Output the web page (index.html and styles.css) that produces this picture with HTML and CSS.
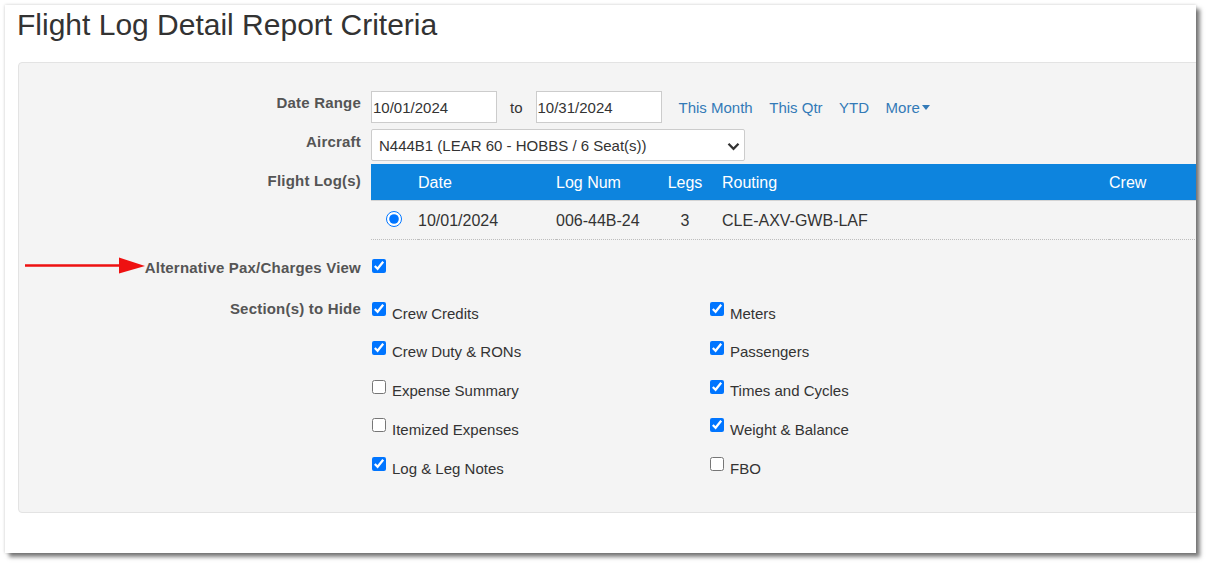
FILE: index.html
```html
<!DOCTYPE html>
<html lang="en">
<head>
<meta charset="utf-8">
<title>Flight Log Detail Report Criteria</title>
<link rel="stylesheet" href="styles.css">
</head>
<body>
<div class="window">
  <svg class="annot-arrow" width="160" height="40" viewBox="0 0 160 40" aria-hidden="true">
    <path d="M20 20.5 L118 20.5" stroke="#ee1111" stroke-width="2.4" fill="none"/>
    <polygon points="114,12.5 140,21 114,28.5" fill="#ee1111"/>
  </svg>

  <h1 class="title">Flight Log Detail Report Criteria</h1>

  <div class="panel">
    <div class="form-row row-date">
      <label class="field-label">Date Range</label>
      <div class="field date-field">
        <input type="text" class="text-input" value="10/01/2024">
        <span class="to">to</span>
        <input type="text" class="text-input" value="10/31/2024">
        <a class="quick-link first">This Month</a>
        <a class="quick-link">This Qtr</a>
        <a class="quick-link">YTD</a>
        <a class="quick-link">More<span class="caret"></span></a>
      </div>
    </div>

    <div class="form-row row-aircraft">
      <label class="field-label">Aircraft</label>
      <div class="field">
        <div class="select-wrap">
          <select class="select-input">
            <option>N444B1 (LEAR 60 - HOBBS / 6 Seat(s))</option>
          </select>
          <svg class="select-chevron" width="13" height="9" viewBox="0 0 13 9" aria-hidden="true">
            <path d="M1.5 1.8 L6.5 6.8 L11.5 1.8" stroke="#333" stroke-width="2.3" fill="none"/>
          </svg>
        </div>
      </div>
    </div>

    <div class="form-row row-logs">
      <label class="field-label">Flight Log(s)</label>
      <div class="field">
        <table class="log-table">
          <colgroup>
            <col class="c-radio"><col class="c-date"><col class="c-num"><col class="c-legs"><col class="c-route"><col class="c-crew">
          </colgroup>
          <thead>
            <tr><th></th><th>Date</th><th>Log Num</th><th class="legs">Legs</th><th class="route">Routing</th><th>Crew</th></tr>
          </thead>
          <tbody>
            <tr>
              <td><input type="radio" class="radio" name="log" checked></td>
              <td>10/01/2024</td>
              <td>006-44B-24</td>
              <td class="legs">3</td>
              <td class="route">CLE-AXV-GWB-LAF</td>
              <td></td>
            </tr>
          </tbody>
        </table>
      </div>
    </div>

    <div class="form-row row-alt">
      <label class="field-label">Alternative Pax/Charges View</label>
      <div class="field">
        <input type="checkbox" class="check alt-check" checked>
      </div>
    </div>

    <div class="form-row row-sections">
      <label class="field-label">Section(s) to Hide</label>
      <div class="field section-grid">
        <label class="check-item"><input type="checkbox" class="check" checked><span>Crew Credits</span></label>
        <label class="check-item"><input type="checkbox" class="check" checked><span>Crew Duty &amp; RONs</span></label>
        <label class="check-item"><input type="checkbox" class="check"><span>Expense Summary</span></label>
        <label class="check-item"><input type="checkbox" class="check"><span>Itemized Expenses</span></label>
        <label class="check-item"><input type="checkbox" class="check" checked><span>Log &amp; Leg Notes</span></label>
        <label class="check-item"><input type="checkbox" class="check" checked><span>Meters</span></label>
        <label class="check-item"><input type="checkbox" class="check" checked><span>Passengers</span></label>
        <label class="check-item"><input type="checkbox" class="check" checked><span>Times and Cycles</span></label>
        <label class="check-item"><input type="checkbox" class="check" checked><span>Weight &amp; Balance</span></label>
        <label class="check-item"><input type="checkbox" class="check"><span>FBO</span></label>
      </div>
    </div>
  </div>
</div>
</body>
</html>
```

FILE: styles.css
```css
* { box-sizing: border-box; }

html, body { height: 100%; }

body {
  margin: 0;
  background: #ffffff;
  font-family: "Liberation Sans", Arial, sans-serif;
  color: #333;
}

.window {
  position: relative;
  margin: 5px 0 0 5px;
  width: 1191px;
  height: 548px;
  background: #ffffff;
  overflow: hidden;
  box-shadow: 4px 4px 4px rgba(0, 0, 0, 0.5), 0 0 3px rgba(0, 0, 0, 0.2);
}

.annot-arrow {
  position: absolute;
  left: 0;
  top: 240px;
  z-index: 2;
}

.title {
  margin: 3px 0 0 12px;
  font-size: 30px;
  line-height: 34px;
  font-weight: normal;
  color: #333;
}

.panel {
  margin: 20px 0 0 13px;
  width: 1300px;
  background: #f4f4f4;
  border: 1px solid #e3e3e3;
  border-radius: 4px;
  padding: 28px 0 19px;
}

.form-row {
  display: flex;
  align-items: flex-start;
}

.field-label {
  flex: none;
  width: 342px;
  margin-right: 10px;
  text-align: right;
  font-weight: bold;
  font-size: 15px;
  line-height: 20px;
  color: #555;
  letter-spacing: 0.2px;
}

.field {
  flex: 1;
  min-width: 0;
}

/* Date range row */
.row-date { height: 32px; margin-bottom: 6px; }
.row-date .field-label { padding-top: 2px; }

.date-field {
  display: flex;
  align-items: center;
  height: 32px;
  font-size: 15px;
}

.text-input {
  width: 126px;
  height: 32px;
  border: 1px solid #cccccc;
  border-radius: 0;
  padding: 0 2px 0 1px;
  font-family: "Liberation Sans", Arial, sans-serif;
  font-size: 15px;
  color: #333;
  background: #fff;
  outline: none;
}

.to {
  margin: 0 13px;
  color: #333;
}

.quick-link {
  margin-left: 16.5px;
  color: #337ab7;
  text-decoration: none;
  white-space: nowrap;
}
.quick-link.first { margin-left: 17px; }

.caret {
  display: inline-block;
  margin-left: 2px;
  width: 0;
  height: 0;
  border-top: 5px solid #337ab7;
  border-left: 4.5px solid transparent;
  border-right: 4.5px solid transparent;
  vertical-align: 3px;
}

/* Aircraft row */
.row-aircraft { height: 32px; margin-bottom: 3px; }
.row-aircraft .field-label { padding-top: 3px; }

.select-wrap {
  position: relative;
  width: 374px;
}

.select-input {
  appearance: none;
  -webkit-appearance: none;
  display: block;
  width: 374px;
  height: 32px;
  border: 1px solid #cccccc;
  border-radius: 2px;
  background: #fff;
  padding: 0 24px 0 7px;
  font-family: "Liberation Sans", Arial, sans-serif;
  font-size: 15px;
  color: #333;
  outline: none;
}

.select-chevron {
  position: absolute;
  right: 5px;
  top: 13px;
  pointer-events: none;
}

/* Flight logs table */
.row-logs .field-label { padding-top: 7px; }

.log-table {
  width: 888px;
  table-layout: fixed;
  border-collapse: separate;
  border-spacing: 0;
  font-size: 16px;
  color: #333;
}

.c-radio { width: 47px; }
.c-date { width: 138px; }
.c-num { width: 104px; }
.c-legs { width: 50px; }
.c-route { width: 399px; }
.c-crew { width: 150px; }

.log-table th {
  height: 37px;
  padding: 1px 0 0;
  background: #0d84de;
  color: #fff;
  font-weight: normal;
  text-align: left;
  border-bottom: 1px solid #d4d4d4;
}

.log-table td {
  height: 39px;
  padding: 1px 0 0;
  border-bottom: 1px dotted #bdbdbd;
  vertical-align: middle;
}

.log-table .legs { text-align: center; }
.log-table .route { padding-left: 12px; }

.radio {
  width: 16px;
  height: 16px;
  margin: 0 0 3px 15px;
  vertical-align: middle;
  accent-color: #0075ff;
}

/* Alternative row */
.row-alt { margin-top: 18px; height: 20px; }

.check {
  flex: none;
  width: 14px;
  height: 14px;
  margin: 0;
  accent-color: #0075ff;
}

.alt-check {
  display: block;
  margin: 1px 0 0 1px;
}

/* Sections row */
.row-sections { margin-top: 21px; }

.section-grid {
  display: grid;
  grid-template-columns: 338px 338px;
  grid-template-rows: repeat(5, 38.75px);
  grid-auto-flow: column;
}

.check-item {
  display: flex;
  align-items: flex-start;
  font-size: 15px;
  line-height: 20px;
  color: #333;
}

.check-item .check {
  margin: 3px 6px 0 1px;
}

.check-item span {
  padding-top: 4.5px;
}
```
